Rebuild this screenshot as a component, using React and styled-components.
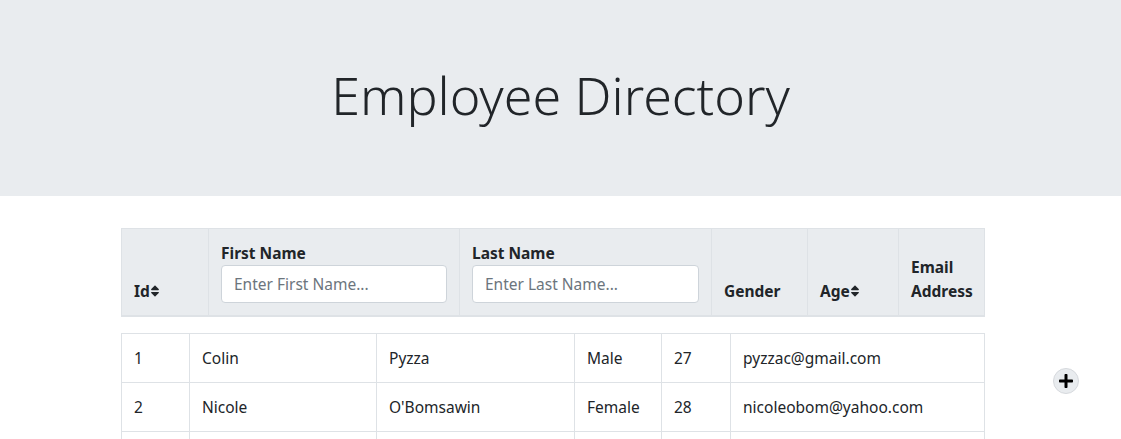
import styled, { createGlobalStyle } from "styled-components";
import { FaSort, FaPlus } from "react-icons/fa";

const GlobalStyle = createGlobalStyle`
  body {
    margin: 0;
    font-family: "Segoe UI", "Noto Sans", sans-serif;
    font-size: 16px;
    line-height: 1.5;
    color: #212529;
    background: #fff;
  }
  * { box-sizing: border-box; }
`;

const Jumbotron = styled.header`
  height: 196px;
  background: #e9ecef;
  display: flex;
  align-items: center;
  justify-content: center;
  padding-bottom: 6px;
  margin-bottom: 32px;
`;

const Title = styled.h1`
  margin: 0;
  font-size: 52px;
  font-weight: 300;
  line-height: 1.2;
  color: #212529;
`;

const Main = styled.main`
  padding-left: 121px;
`;

const Table = styled.table`
  border-collapse: collapse;
  table-layout: fixed;
  width: 863px;
`;

const HeadCell = styled.th`
  background: #e9ecef;
  border: 1px solid #dee2e6;
  border-bottom-width: 2px;
  padding: 12px;
  text-align: left;
  vertical-align: bottom;
  font-weight: 700;
  line-height: 24px;
  font-size: 15.5px;
`;

const Label = styled.div`
  font-weight: 700;
`;

const Input = styled.input`
  display: block;
  width: 100%;
  height: 38px;
  padding: 6px 12px;
  font: inherit;
  font-size: 15.5px;
  font-weight: 400;
  color: #495057;
  background: #fff;
  border: 1px solid #ced4da;
  border-radius: 4px;
  &::placeholder {
    color: #6c757d;
  }
`;

const SortIcon = styled(FaSort)`
  width: 10px;
  height: 14px;
  vertical-align: -1px;
`;

const BodyRow = styled.div`
  display: flex;
  align-items: flex-start;
  margin-top: 16px;
`;

const Cell = styled.td`
  border: 1px solid #dee2e6;
  padding: 12px;
  font-size: 15.5px;
  line-height: 24px;
  white-space: nowrap;
`;

const AddButton = styled.button`
  margin: 35px 0 0 68px;
  width: 26px;
  height: 26px;
  border-radius: 50%;
  border: 1px solid #d6d9dd;
  background: #e9ecef;
  display: flex;
  align-items: center;
  justify-content: center;
  padding: 0;
  color: #000;
  svg {
    width: 16px;
    height: 16px;
  }
`;

const employees = [
  { id: 1, first: "Colin", last: "Pyzza", gender: "Male", age: 27, email: "pyzzac@gmail.com" },
  { id: 2, first: "Nicole", last: "O'Bomsawin", gender: "Female", age: 28, email: "nicoleobom@yahoo.com" },
  { id: 3, first: "Marcus", last: "Delaney", gender: "Male", age: 34, email: "mdelaney@gmail.com" },
];

function App() {
  return (
    <>
      <GlobalStyle />
      <Jumbotron>
        <Title>Employee Directory</Title>
      </Jumbotron>
      <Main>
        <Table>
          <colgroup>
            <col style={{ width: 87 }} />
            <col style={{ width: 251 }} />
            <col style={{ width: 252 }} />
            <col style={{ width: 96 }} />
            <col style={{ width: 91 }} />
            <col style={{ width: 86 }} />
          </colgroup>
          <thead>
            <tr>
              <HeadCell>
                Id<SortIcon />
              </HeadCell>
              <HeadCell>
                <Label>First Name</Label>
                <Input placeholder="Enter First Name..." />
              </HeadCell>
              <HeadCell>
                <Label>Last Name</Label>
                <Input placeholder="Enter Last Name..." />
              </HeadCell>
              <HeadCell>Gender</HeadCell>
              <HeadCell>
                Age<SortIcon />
              </HeadCell>
              <HeadCell>Email Address</HeadCell>
            </tr>
          </thead>
        </Table>
        <BodyRow>
          <Table>
            <colgroup>
              <col style={{ width: 68 }} />
              <col style={{ width: 187 }} />
              <col style={{ width: 198 }} />
              <col style={{ width: 87 }} />
              <col style={{ width: 69 }} />
              <col style={{ width: 254 }} />
            </colgroup>
            <tbody>
              {employees.map((e) => (
                <tr key={e.id}>
                  <Cell>{e.id}</Cell>
                  <Cell>{e.first}</Cell>
                  <Cell>{e.last}</Cell>
                  <Cell>{e.gender}</Cell>
                  <Cell>{e.age}</Cell>
                  <Cell>{e.email}</Cell>
                </tr>
              ))}
            </tbody>
          </Table>
          <AddButton aria-label="Add employee">
            <FaPlus />
          </AddButton>
        </BodyRow>
      </Main>
    </>
  );
}

export default App;
